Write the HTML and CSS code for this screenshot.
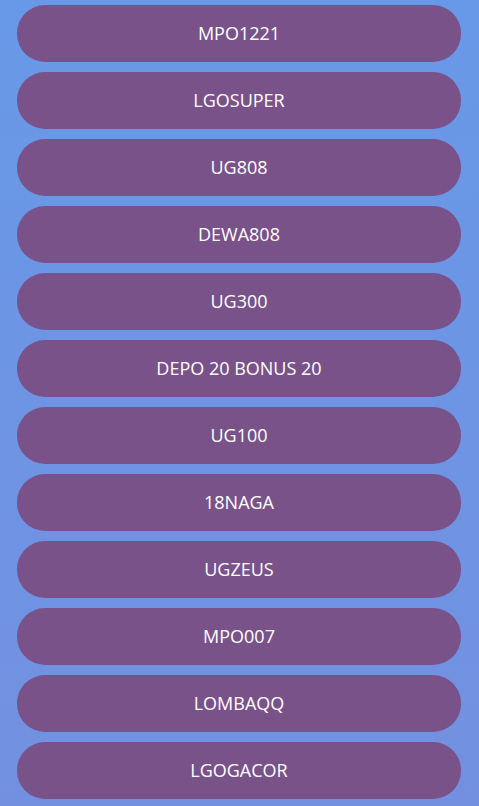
FILE: index.html
```html
<html lang="id">

<head>
	<title>Link Alternatif</title>
	<meta charset="utf-8">
	<meta name="viewport" content="width=device-width, initial-scale=1.0">
	<link rel="stylesheet" href="styles.css">
</head>

<body>
	<div class="links">
		<a class="btn" href="#">MPO1221</a>
		<a class="btn" href="#">LGOSUPER</a>
		<a class="btn" href="#">UG808</a>
		<a class="btn" href="#">DEWA808</a>
		<a class="btn" href="#">UG300</a>
		<a class="btn" href="#">DEPO 20 BONUS 20</a>
		<a class="btn" href="#">UG100</a>
		<a class="btn" href="#">18NAGA</a>
		<a class="btn" href="#">UGZEUS</a>
		<a class="btn" href="#">MPO007</a>
		<a class="btn" href="#">LOMBAQQ</a>
		<a class="btn" href="#">LGOGACOR</a>
	</div>
</body>
</html>
```

FILE: styles.css
```css
html, body {
	margin: 0;
	padding: 0;
	font-family: "Open Sans", "Liberation Sans", sans-serif;
}

*, *:before, *:after {
	box-sizing: border-box;
}

body {
	min-height: 100vh;
	background: linear-gradient(180deg, #6899e8 0%, #7390e0 100%);
}

.links {
	display: flex;
	flex-direction: column;
	gap: 10px;
	padding: 5px 18px 10px 17px;
}

.btn {
	display: flex;
	align-items: center;
	justify-content: center;
	height: 57px;
	padding-bottom: 2px;
	border-radius: 28px;
	background: #79528a;
	color: #fff;
	text-decoration: none;
	font-size: 18px;
	font-weight: 500;
}
```
